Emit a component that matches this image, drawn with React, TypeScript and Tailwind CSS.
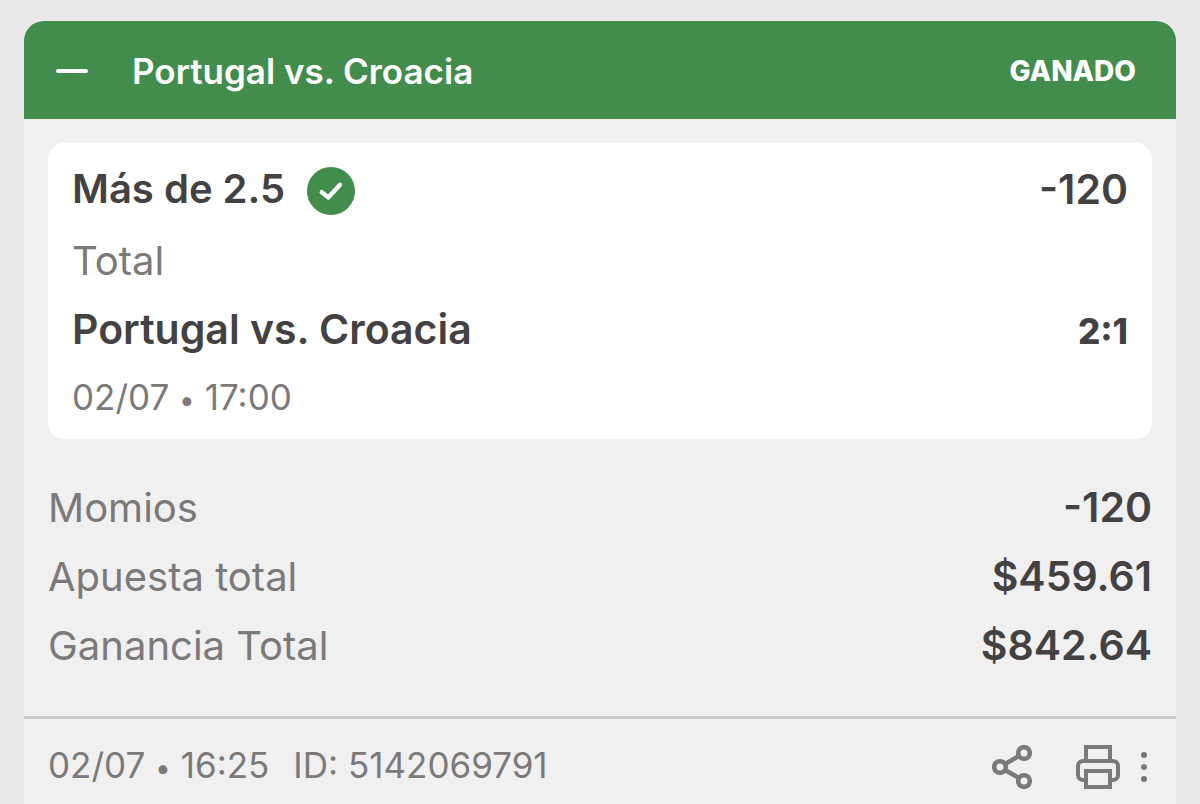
import React from 'react';

interface selectionProps {
  pick: string;
  odds: string;
  market: string;
  match: string;
  score: string;
  day: string;
  time: string;
}

interface dateProps {
  day: string;
  time: string;
}

interface summaryProps {
  label: string;
  value: string;
}

const summary: summaryProps[] = [
  { label: 'Momios', value: '-120' },
  { label: 'Apuesta total', value: '$459.61' },
  { label: 'Ganancia Total', value: '$842.64' },
];

const CheckBadge: React.FC = () => (
  <svg className="mt-1 size-12" viewBox="0 0 48 48" fill="none" role="img" aria-label="Ganado">
    <circle cx="24" cy="24" r="24" fill="#428d4b" />
    <path d="M14.8 25.2 21.3 30.4 33 17.8" stroke="#fff" strokeWidth="4.4" strokeLinecap="round" strokeLinejoin="round" />
  </svg>
);

const ShareIcon: React.FC = () => (
  <svg className="h-11 w-10" viewBox="0 0 40 44" fill="none" stroke="currentColor" strokeWidth="4.6">
    <circle cx="8" cy="22" r="5.8" />
    <circle cx="32" cy="8" r="5.8" />
    <circle cx="32" cy="36" r="5.8" />
    <path d="M13 19 27 11M13 25l14 8" />
  </svg>
);

const PrintIcon: React.FC = () => (
  <svg className="h-11 w-11" viewBox="0 0 44 44" fill="none" stroke="currentColor" strokeWidth="4">
    <path d="M10 16V2h24v14" />
    <path d="M10 35H7a5 5 0 0 1-5-5v-9a5 5 0 0 1 5-5h30a5 5 0 0 1 5 5v9a5 5 0 0 1-5 5h-3" />
    <path d="M10 26h24v16H10z" />
  </svg>
);

const MoreIcon: React.FC = () => (
  <svg className="h-8 w-2" viewBox="0 0 8 32" fill="currentColor">
    <circle cx="4" cy="4" r="3" />
    <circle cx="4" cy="16" r="3" />
    <circle cx="4" cy="28" r="3" />
  </svg>
);

const DateTime: React.FC<dateProps> = ({ day, time }) => (
  <span>
    {day} <span className="text-[28px] leading-none">•</span> {time}
  </span>
);

const Selection: React.FC<selectionProps> = ({ pick, odds, market, match, score, day, time }) => {
  return (
    <section className="rounded-2xl bg-white px-6 pt-3 pb-2 text-[40px] leading-[68px]">
      <div className="flex items-center justify-between font-semibold text-[#434142]">
        <h3 className="flex items-center gap-[22px]">
          {pick}
          <CheckBadge />
        </h3>
        <span className="text-[41px]">{odds}</span>
      </div>
      <p className="pt-1 text-[#7b7979]">{market}</p>
      <div className="flex h-[68px] items-baseline justify-between text-[#434142]">
        <h3 className="text-[41px] font-semibold">{match}</h3>
        <b className="text-[35px] font-extrabold">{score}</b>
      </div>
      <p className="text-[35px] text-[#7b7979]">
        <DateTime day={day} time={time} />
      </p>
    </section>
  );
};

const App: React.FC = () => {
  return (
    <main className="flex min-h-screen flex-col bg-[#e9e9e9] px-6 pt-[21px] font-['Inter',sans-serif]">
      <article className="flex flex-1 flex-col rounded-t-[20px] bg-[#f0f0f0]">
        <header className="flex h-[98px] items-center rounded-t-[20px] bg-[#428d4b] pt-0.5 pr-10 pl-8 text-white">
          <button type="button" aria-label="Contraer" className="flex h-12 w-8 items-center">
            <span className="h-1 w-full rounded-full bg-white" />
          </button>
          <h2 className="flex-1 pl-11 text-[35px] font-semibold">Portugal vs. Croacia</h2>
          <span className="text-[28px] font-extrabold">GANADO</span>
        </header>

        <div className="px-6 pt-6">
          <Selection
            pick="Más de 2.5"
            odds="-120"
            market="Total"
            match="Portugal vs. Croacia"
            score="2:1"
            day="02/07"
            time="17:00"
          />
        </div>

        <dl className="px-6 pt-[34px] pb-9 text-[40px] leading-[69px]">
          {summary.map(({ label, value }) => (
            <div key={label} className="flex justify-between">
              <dt className="text-[#7b7979]">{label}</dt>
              <dd className="text-[41px] font-semibold text-[#434142]">{value}</dd>
            </div>
          ))}
        </dl>

        <footer className="flex items-end justify-between border-t-3 border-[#c8c8c8] pt-4 pr-7 pl-6 text-[#7b7979]">
          <p className="flex gap-6 text-[35px] leading-[60px]">
            <DateTime day="02/07" time="16:25" />
            <span>ID: 5142069791</span>
          </p>
          <div className="flex items-center pb-1.5">
            <button type="button" aria-label="Compartir">
              <ShareIcon />
            </button>
            <button type="button" aria-label="Imprimir" className="pl-11">
              <PrintIcon />
            </button>
            <button type="button" aria-label="Más opciones" className="pl-5">
              <MoreIcon />
            </button>
          </div>
        </footer>
      </article>
    </main>
  );
};

export default App;
